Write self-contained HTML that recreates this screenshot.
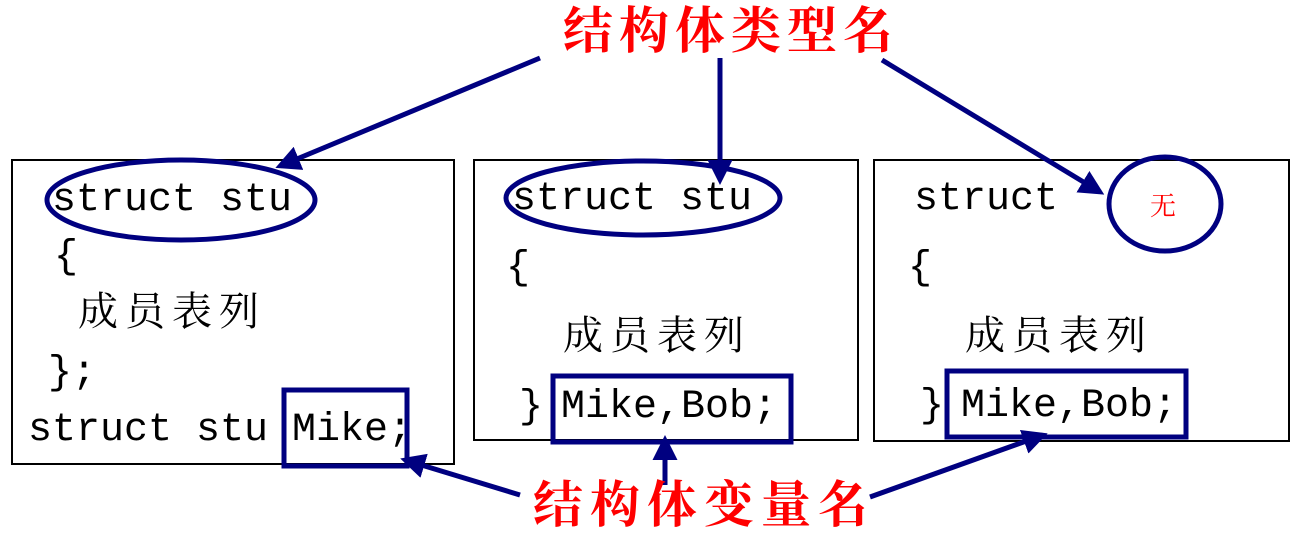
<!DOCTYPE html>
<html><head><meta charset="utf-8"><style>
body{margin:0;width:1302px;height:534px;background:#fff;position:relative;overflow:hidden}
.t{position:absolute;font-family:"Liberation Mono",monospace;font-size:40px;color:#000;line-height:1;white-space:pre}
.c{position:absolute;font-family:"Liberation Serif","Noto Serif CJK SC",serif;font-size:40px;letter-spacing:7px;color:#000;line-height:1;white-space:pre}
.r{position:absolute;font-family:"Liberation Sans","Noto Serif CJK SC",serif;font-weight:bold;font-size:50px;color:#f00;line-height:1;letter-spacing:6px;white-space:pre}
</style></head><body>
<svg width="1302" height="534" style="position:absolute;left:0;top:0">
<defs><marker id="a" markerWidth="5" markerHeight="5" refX="4" refY="2.5" orient="auto"><path d="M0,0 L5,2.5 L0,5 z" fill="#000080"/></marker></defs>
<g fill="none" stroke="#000" stroke-width="2">
<rect x="12" y="160" width="442" height="304"/>
<rect x="474" y="160" width="384" height="280"/>
<rect x="874" y="160" width="415" height="281"/>
</g>
<g fill="none" stroke="#000080" stroke-width="5">
<ellipse cx="181" cy="200" rx="134" ry="40"/>
<ellipse cx="643" cy="198" rx="137" ry="37"/>
<ellipse cx="1165" cy="204" rx="56" ry="47"/>
<rect x="284" y="390" width="123" height="76"/>
<rect x="553" y="376" width="238" height="66"/>
<rect x="947" y="371" width="239" height="66"/>
<line x1="540" y1="58" x2="280" y2="166" marker-end="url(#a)"/>
<line x1="720" y1="58" x2="720" y2="180" marker-end="url(#a)"/>
<line x1="882" y1="60" x2="1100" y2="192" marker-end="url(#a)"/>
<line x1="520" y1="495" x2="405" y2="460" marker-end="url(#a)"/>
<line x1="665" y1="485" x2="665" y2="440" marker-end="url(#a)"/>
<line x1="870" y1="497" x2="1043" y2="435" marker-end="url(#a)"/>
</g>
</svg>
<div class="r" style="left:563px;top:6px">结构体类型名</div>
<div class="r" style="left:533px;top:480px;letter-spacing:7px">结构体变量名</div>
<div class="t" style="left:52px;top:181px">struct stu</div>
<div class="t" style="left:54px;top:238px">{</div>
<div class="c" style="left:78px;top:292px">成员表列</div>
<div class="t" style="left:48px;top:354px">};</div>
<div class="t" style="left:28px;top:411px">struct stu Mike;</div>
<div class="t" style="left:512px;top:180px">struct stu</div>
<div class="t" style="left:506px;top:249px">{</div>
<div class="c" style="left:563px;top:316px">成员表列</div>
<div class="t" style="left:519px;top:388px">}</div>
<div class="t" style="left:561px;top:388px">Mike,Bob;</div>
<div class="t" style="left:914px;top:180px">struct</div>
<div class="t" style="left:908px;top:249px">{</div>
<div class="c" style="left:965px;top:316px">成员表列</div>
<div class="t" style="left:920px;top:387px">}</div>
<div class="t" style="left:961px;top:387px">Mike,Bob;</div>
<div class="c" style="left:1150px;top:194px;font-size:26px;color:#f00;letter-spacing:0">无</div>
</body></html>
